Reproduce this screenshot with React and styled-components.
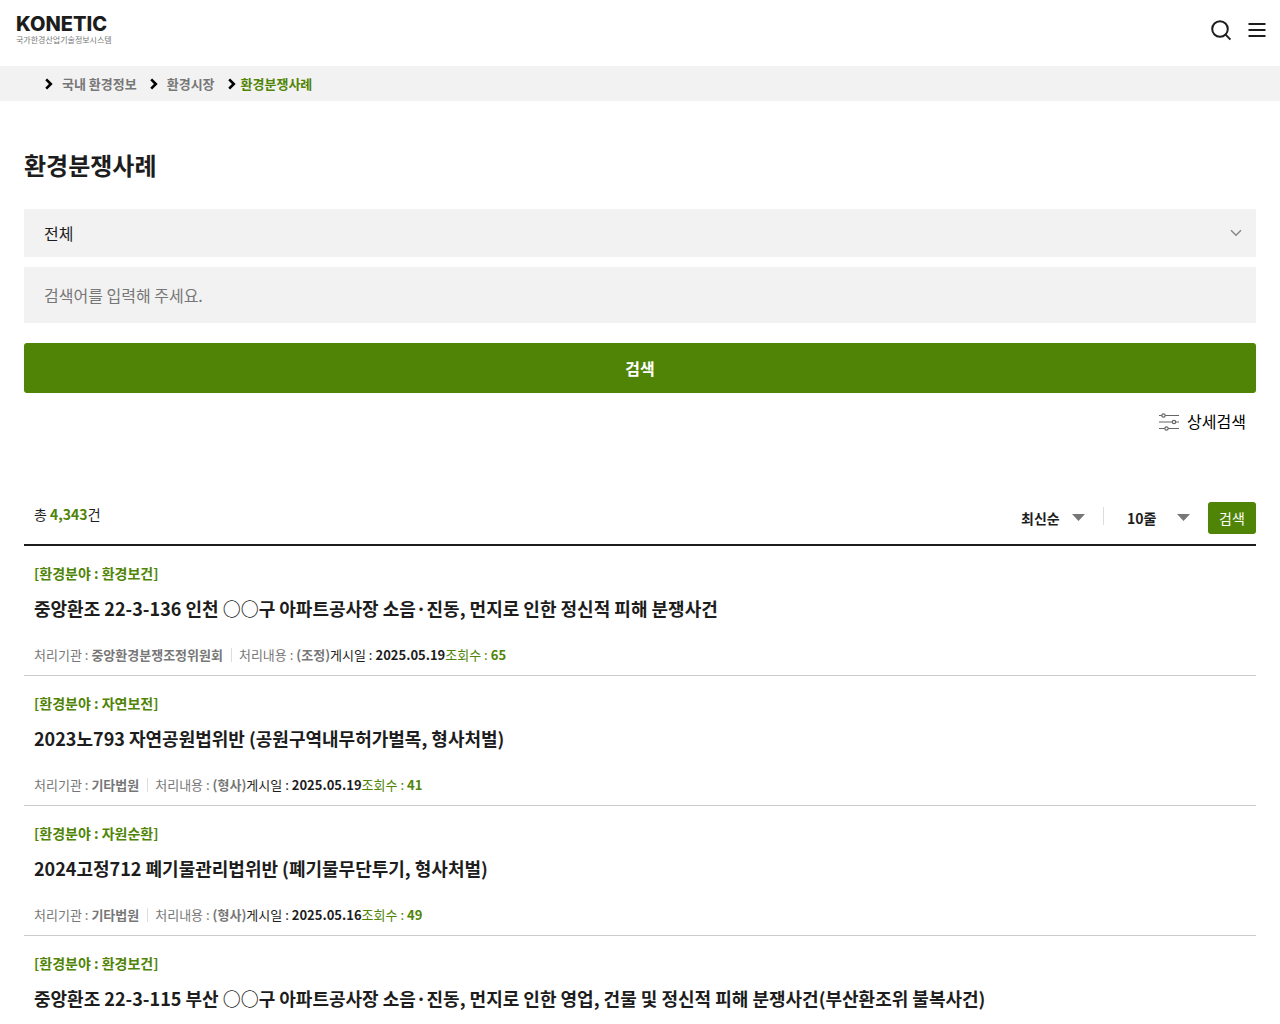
import React, { useState } from "react";
import styled, { createGlobalStyle } from "styled-components";

const GlobalStyle = createGlobalStyle`
  * {
    box-sizing: border-box;
  }
  body {
    margin: 0;
    background: #fff;
    color: #1d1d1d;
    font-family: "Noto Sans CJK KR", sans-serif;
    font-size: 16px;
    line-height: 24px;
  }
  a {
    color: inherit;
    text-decoration: none;
  }
  button,
  input,
  select {
    margin: 0;
    border: 0;
    font-family: inherit;
    color: inherit;
  }
  button {
    padding: 0;
    background: none;
    cursor: pointer;
  }
`;

const Header = styled.header`
  height: 66px;
  padding: 0 14px 6px 16px;
  display: flex;
  align-items: center;
  justify-content: space-between;
`;
const Logo = styled.a`
  display: flex;
  flex-direction: column;
`;
const LogoName = styled.span`
  font-family: Inter, sans-serif;
  font-size: 20px;
  font-weight: 800;
  line-height: 20px;
`;
const LogoCaption = styled.span`
  font-size: 8px;
  line-height: 12px;
  color: #777;
`;
const HeaderTools = styled.div`
  display: flex;
  gap: 16px;
`;
const IconButton = styled.button`
  display: flex;
`;

const Breadcrumb = styled.nav`
  height: 35px;
  padding-left: 45px;
  background: #f2f2f2;
`;
const Crumbs = styled.ol`
  height: 100%;
  margin: 0;
  padding: 0;
  display: flex;
  align-items: center;
  gap: 13px;
  list-style: none;
`;
const Crumb = styled.li`
  display: flex;
  align-items: center;
  gap: ${({ $current }) => ($current ? "5px" : "9px")};
  color: ${({ $current }) => ($current ? "#508406" : "#777")};
  font-size: 13px;
  font-weight: 700;
  line-height: 20px;
`;

const Main = styled.main`
  padding: 44px 24px 0;
`;
const PageTitle = styled.h1`
  margin: 0 0 24px;
  font-size: 24px;
  line-height: 40px;
`;

const SearchForm = styled.form`
  display: flex;
  flex-direction: column;
`;
const SelectBox = styled.div`
  position: relative;
  display: flex;
`;
const FieldSelect = styled.select`
  width: 100%;
  height: 48px;
  padding: 0 20px;
  appearance: none;
  border-radius: 0;
  background: #f2f2f2;
  font-size: 16px;
`;
const SelectArrow = styled.svg`
  position: absolute;
  top: 50%;
  right: ${({ $inset }) => $inset};
  transform: translateY(-50%);
  pointer-events: none;
`;
const KeywordInput = styled.input`
  width: 100%;
  height: 56px;
  margin-top: 10px;
  padding: 0 20px;
  border-radius: 0;
  background: #f2f2f2;
  font-size: 16px;
  &::placeholder {
    color: #777;
    opacity: 1;
  }
`;
const SubmitButton = styled.button`
  height: 50px;
  margin-top: 20px;
  border-radius: 3px;
  background: #508406;
  color: #fff;
  font-size: 16px;
  font-weight: 700;
`;
const DetailButton = styled.button`
  align-self: flex-end;
  margin: 16px 10px 0 0;
  display: flex;
  align-items: center;
  gap: 8px;
  color: #000;
  font-size: 16px;
  line-height: 24px;
`;

const ListHeader = styled.div`
  margin-top: 69px;
  padding: 0 0 10px 10px;
  display: flex;
  align-items: flex-start;
  justify-content: space-between;
  border-bottom: 2px solid #1d1d1d;
`;
const Total = styled.p`
  margin: 0;
  font-size: 14px;
  line-height: 24px;
  strong {
    color: #508406;
  }
`;
const SortForm = styled.form`
  display: flex;
  align-items: center;
`;
const SortSelect = styled.select`
  width: ${({ $width }) => $width};
  height: 30px;
  padding: 0;
  appearance: none;
  background: none;
  font-size: 14px;
  font-weight: 700;
`;
const SortDivider = styled.span`
  width: 1px;
  height: 18px;
  margin: 0 23px 4px 18px;
  background: #ddd;
`;
const SortButton = styled.button`
  width: 48px;
  height: 32px;
  margin-left: 18px;
  border-radius: 3px;
  background: #508406;
  color: #fff;
  font-size: 14px;
`;

const CaseList = styled.ul`
  margin: 0;
  padding: 0;
  list-style: none;
`;
const CaseItem = styled.li`
  padding: 16px 10px 9px;
  border-bottom: 1px solid #ccc;
`;
const Category = styled.p`
  margin: 0;
  color: #508406;
  font-size: 14px;
  font-weight: 700;
  line-height: 22px;
`;
const CaseTitle = styled.h2`
  margin: 10px 0 22px;
  font-size: 18px;
  line-height: 28px;
`;
const Meta = styled.dl`
  margin: 0;
  display: flex;
  flex-wrap: wrap;
  font-size: 13px;
  line-height: 22px;
`;
const colors = { muted: "#777", dark: "#1d1d1d", green: "#508406" };
const MetaItem = styled.div`
  display: flex;
  align-items: center;
  gap: 3px;
  color: ${({ $tone }) => colors[$tone]};
  & + &::before {
    content: "";
    width: 1px;
    height: 14px;
    margin: 0 4px 0 8px;
    background: #ddd;
  }
  dd {
    margin: 0;
    font-weight: 700;
  }
`;

const cases = [
  {
    field: "환경보건",
    title: "중앙환조 22-3-136 인천 ○○구 아파트공사장 소음·진동, 먼지로 인한 정신적 피해 분쟁사건",
    agency: "중앙환경분쟁조정위원회",
    result: "(조정)",
    date: "2025.05.19",
    views: 65,
  },
  {
    field: "자연보전",
    title: "2023노793 자연공원법위반 (공원구역내무허가벌목, 형사처벌)",
    agency: "기타법원",
    result: "(형사)",
    date: "2025.05.19",
    views: 41,
  },
  {
    field: "자원순환",
    title: "2024고정712 폐기물관리법위반 (폐기물무단투기, 형사처벌)",
    agency: "기타법원",
    result: "(형사)",
    date: "2025.05.16",
    views: 49,
  },
  {
    field: "환경보건",
    title:
      "중앙환조 22-3-115 부산 ○○구 아파트공사장 소음·진동, 먼지로 인한 영업, 건물 및 정신적 피해 분쟁사건(부산환조위 불복사건)",
  },
];

const crumbs = ["국내 환경정보", "환경시장", "환경분쟁사례"];

const CrumbArrow = () => (
  <svg width="8" height="12" viewBox="0 0 8 12" fill="none" stroke="#000" strokeWidth="2.6">
    <path d="M1.2 1.4 5.8 6 1.2 10.6" />
  </svg>
);

const SearchIcon = () => (
  <svg width="22" height="22" viewBox="0 0 22 22" fill="none" stroke="#1d1d1d" strokeWidth="2">
    <circle cx="10" cy="10" r="7.8" />
    <path d="M15.4 15.4 20.4 20.6" />
  </svg>
);

const MenuIcon = () => (
  <svg width="18" height="22" viewBox="0 0 18 22" fill="none" stroke="#1d1d1d" strokeWidth="2">
    <path d="M.5 5h17M.5 11h17M.5 17h17" />
  </svg>
);

const FilterIcon = () => (
  <svg width="20" height="20" viewBox="0 0 20 20" fill="#fff" stroke="#666" strokeWidth="1.2">
    <path d="M0 4.5h20M0 11h20M0 17.5h20" />
    <circle cx="4.5" cy="4.5" r="1.7" />
    <circle cx="15" cy="11" r="1.7" />
    <circle cx="7.5" cy="17.5" r="1.7" />
  </svg>
);

const Triangle = () => (
  <SelectArrow $inset="0" width="13" height="8" viewBox="0 0 13 8">
    <path d="M0 0h13L6.5 7z" fill="#777" />
  </SelectArrow>
);

const MetaEntry = ({ label, value, tone = "muted" }) => (
  <MetaItem $tone={tone}>
    <dt>{label} :</dt>
    <dd>{value}</dd>
  </MetaItem>
);

export default function App() {
  const [keyword, setKeyword] = useState("");
  const stop = (e) => e.preventDefault();

  return (
    <>
      <GlobalStyle />
      <Header>
        <Logo href="#">
          <LogoName>KONETIC</LogoName>
          <LogoCaption>국가한경산업기술정보시스템</LogoCaption>
        </Logo>
        <HeaderTools>
          <IconButton type="button" aria-label="검색 열기">
            <SearchIcon />
          </IconButton>
          <IconButton type="button" aria-label="메뉴 열기">
            <MenuIcon />
          </IconButton>
        </HeaderTools>
      </Header>
      <Breadcrumb>
        <Crumbs>
          {crumbs.map((name, i) => (
            <Crumb key={name} $current={i === crumbs.length - 1}>
              <CrumbArrow />
              <a href="#">{name}</a>
            </Crumb>
          ))}
        </Crumbs>
      </Breadcrumb>
      <Main>
        <PageTitle>환경분쟁사례</PageTitle>
        <SearchForm onSubmit={stop}>
          <SelectBox>
            <FieldSelect aria-label="검색 구분">
              <option>전체</option>
            </FieldSelect>
            <SelectArrow $inset="14px" width="12" height="8" viewBox="0 0 12 8">
              <path d="M1 1.2 6 6.2 11 1.2" fill="none" stroke="#888" strokeWidth="1.5" />
            </SelectArrow>
          </SelectBox>
          <KeywordInput
            type="text"
            aria-label="검색어"
            placeholder="검색어를 입력해 주세요."
            value={keyword}
            onChange={(e) => setKeyword(e.target.value)}
          />
          <SubmitButton type="submit">검색</SubmitButton>
          <DetailButton type="button">
            <FilterIcon />
            상세검색
          </DetailButton>
        </SearchForm>
        <ListHeader>
          <Total>
            총 <strong>4,343</strong>건
          </Total>
          <SortForm onSubmit={stop}>
            <SelectBox>
              <SortSelect $width="64px" aria-label="정렬 순서">
                <option>최신순</option>
              </SortSelect>
              <Triangle />
            </SelectBox>
            <SortDivider />
            <SelectBox>
              <SortSelect $width="63px" aria-label="목록 줄 수">
                <option>10줄</option>
              </SortSelect>
              <Triangle />
            </SelectBox>
            <SortButton type="submit">검색</SortButton>
          </SortForm>
        </ListHeader>
        <CaseList>
          {cases.map((item) => (
            <CaseItem key={item.title}>
              <Category>[환경분야 : {item.field}]</Category>
              <CaseTitle>
                <a href="#">{item.title}</a>
              </CaseTitle>
              {item.agency && (
                <Meta>
                  <MetaEntry label="처리기관" value={item.agency} />
                  <MetaEntry label="처리내용" value={item.result} />
                  <MetaEntry label="게시일" value={item.date} tone="dark" />
                  <MetaEntry label="조회수" value={item.views} tone="green" />
                </Meta>
              )}
            </CaseItem>
          ))}
        </CaseList>
      </Main>
    </>
  );
}
